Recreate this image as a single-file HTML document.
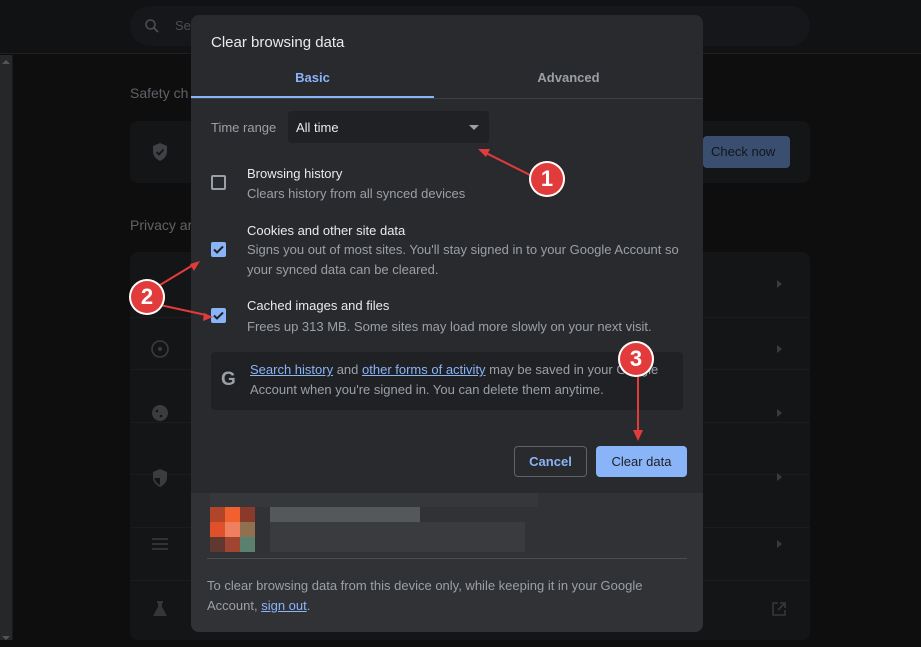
<!DOCTYPE html>
<html><head><meta charset="utf-8"><style>
*{margin:0;padding:0;box-sizing:border-box}
body{width:921px;height:647px;background:#0e0e0f;font-family:"Liberation Sans",Arial,sans-serif;position:relative;overflow:hidden}
.a{position:absolute}
.top{left:0;top:0;width:921px;height:54px;background:#111214;border-bottom:1px solid #1e1f21}
.search{left:130px;top:6px;width:680px;height:40px;border-radius:20px;background:#16171a}
.card{background:#141517;border-radius:8px}
.row{left:130px;width:680px;height:52px;border-top:1px solid #1b1c1e}
.tri{width:0;height:0;border-top:4px solid transparent;border-bottom:4px solid transparent;border-left:5px solid #3a3b3e}
.dlg{left:191px;top:15px;width:512px;height:617px;background:#292a2d;border-radius:8px;overflow:hidden}
.t{color:#e8eaed;font-size:13px}
.s{color:#9aa0a6;font-size:13px}
.cb{width:15px;height:15px;border-radius:2px}
.lnk{color:#8ab4f8;text-decoration:underline}
.px{position:absolute;width:15px;height:15px}
.num{width:36px;height:36px;border-radius:50%;background:#e23b3b;color:#fff;font-weight:bold;font-size:22px;text-align:center;line-height:36px;box-shadow:0 0 0 2px #fff inset}
</style></head><body>
<div class="a top"></div>
<div class="a search"></div>
<svg class="a" style="left:144px;top:18px" width="16" height="16" viewBox="0 0 16 16"><circle cx="6.5" cy="6.5" r="4.5" fill="none" stroke="#4a4d51" stroke-width="1.6"/><path d="M10 10l4 4" stroke="#4a4d51" stroke-width="1.8"/></svg>
<div class="a s" style="left:175px;top:18px;color:#4a4d51">Se</div>
<div class="a" style="left:0;top:55px;width:12px;height:585px;background:#262729"></div>
<div class="a" style="left:12px;top:55px;width:1px;height:585px;background:#1a1a1b"></div>
<div class="a" style="left:2px;top:60px;width:0;height:0;border-left:4px solid transparent;border-right:4px solid transparent;border-bottom:4px solid #555"></div>
<div class="a" style="left:2px;top:636px;width:0;height:0;border-left:4px solid transparent;border-right:4px solid transparent;border-top:4px solid #555"></div>
<div class="a" style="left:130px;top:85px;color:#5f6266;font-size:14px">Safety ch</div>
<div class="a card" style="left:130px;top:121px;width:680px;height:62px"></div>
<svg class="a" style="left:151px;top:142px" width="18" height="20" viewBox="0 0 18 20"><path d="M9 1L2 4v5c0 5 3 8 7 10 4-2 7-5 7-10V4z" fill="#3f4145"/><path d="M5.5 10l2.5 2.5 4.5-5" stroke="#141517" stroke-width="1.8" fill="none"/></svg>
<div class="a" style="left:703px;top:136px;width:87px;height:32px;background:#3a4f70;border-radius:4px;color:#11151c;font-size:13px;line-height:32px;padding-left:8px">Check now</div>
<div class="a" style="left:130px;top:217px;color:#5f6266;font-size:14px">Privacy ar</div>
<div class="a card" style="left:130px;top:252px;width:680px;height:388px"></div>
<div class="a row" style="top:317px"></div><div class="a row" style="top:369px"></div><div class="a row" style="top:422px"></div><div class="a row" style="top:474px"></div><div class="a row" style="top:527px"></div><div class="a row" style="top:580px"></div>
<div class="a tri" style="left:777px;top:280px"></div><div class="a tri" style="left:777px;top:345px"></div><div class="a tri" style="left:777px;top:409px"></div><div class="a tri" style="left:777px;top:473px"></div><div class="a tri" style="left:777px;top:540px"></div>
<svg class="a" style="left:771px;top:601px" width="16" height="16" viewBox="0 0 16 16"><path d="M7 2H2v12h12V9M9 2h5v5M14 2L7 9" stroke="#36383b" stroke-width="1.6" fill="none"/></svg>
<svg class="a" style="left:150px;top:339px" width="20" height="20"><circle cx="10" cy="10" r="8" fill="none" stroke="#3a3c40" stroke-width="1.6"/><circle cx="10" cy="10" r="2" fill="#3a3c40"/></svg>
<svg class="a" style="left:151px;top:404px" width="18" height="18"><circle cx="9" cy="9" r="8" fill="#3a3c40"/><circle cx="6" cy="7" r="1.3" fill="#141517"/><circle cx="10" cy="12" r="1.3" fill="#141517"/></svg>
<svg class="a" style="left:151px;top:468px" width="18" height="20"><path d="M9 1L2 4v5c0 5 3 8 7 10 4-2 7-5 7-10V4z" fill="#3a3c40"/><path d="M9 3v7H3.5c.5 3 2.5 5.5 5.5 7z" fill="#141517"/></svg>
<svg class="a" style="left:151px;top:535px" width="18" height="18"><path d="M1 4h16M1 9h16M1 14h16" stroke="#3a3c40" stroke-width="1.6"/></svg>
<svg class="a" style="left:151px;top:600px" width="18" height="18"><path d="M6 1h6v2h-1v4l5 9H2l5-9V3H6z" fill="#34363a"/></svg>

<div class="a dlg">
 <div class="a" style="left:20px;top:19px;color:#e8eaed;font-size:15px">Clear browsing data</div>
 <div class="a" style="left:0;top:55px;width:243px;text-align:center;color:#8ab4f8;font-size:13px;font-weight:bold">Basic</div>
 <div class="a" style="left:243px;top:55px;width:269px;text-align:center;color:#9aa0a6;font-size:13px;font-weight:bold">Advanced</div>
 <div class="a" style="left:0;top:81px;width:243px;height:2px;background:#8ab4f8"></div>
 <div class="a" style="left:0;top:83px;width:512px;height:1px;background:#3c4043"></div>
 <div class="a s" style="left:20px;top:105px">Time range</div>
 <div class="a" style="left:97px;top:96px;width:201px;height:32px;background:#202124;border-radius:4px"></div>
 <div class="a t" style="left:105px;top:105px">All time</div>
 <div class="a" style="left:278px;top:110px;border-left:5px solid transparent;border-right:5px solid transparent;border-top:5px solid #9aa0a6"></div>
 <div class="a cb" style="left:20px;top:160px;border:2px solid #9aa0a6"></div>
 <div class="a t" style="left:56px;top:151px">Browsing history</div>
 <div class="a s" style="left:56px;top:171px">Clears history from all synced devices</div>
 <div class="a cb" style="left:20px;top:227px;background:#8ab4f8"></div>
 <svg class="a" style="left:20px;top:227px" width="15" height="15"><path d="M3 7.5l3 3 6-6" stroke="#202124" stroke-width="2" fill="none"/></svg>
 <div class="a t" style="left:56px;top:208px">Cookies and other site data</div>
 <div class="a s" style="left:56px;top:225px;line-height:20px;width:440px">Signs you out of most sites. You'll stay signed in to your Google Account so your synced data can be cleared.</div>
 <div class="a cb" style="left:20px;top:293px;background:#8ab4f8"></div>
 <svg class="a" style="left:20px;top:293px" width="15" height="15"><path d="M3 7.5l3 3 6-6" stroke="#202124" stroke-width="2" fill="none"/></svg>
 <div class="a t" style="left:56px;top:283px">Cached images and files</div>
 <div class="a s" style="left:56px;top:304px">Frees up 313 MB. Some sites may load more slowly on your next visit.</div>
 <div class="a" style="left:20px;top:337px;width:472px;height:58px;background:#202124;border-radius:4px"></div>
 <div class="a" style="left:30px;top:354px;color:#9aa0a6;font-size:19px;font-weight:bold">G</div>
 <div class="a s" style="left:59px;top:345px;line-height:20px;width:430px"><span class="lnk">Search history</span> and <span class="lnk">other forms of activity</span> may be saved in your Google Account when you're signed in. You can delete them anytime.</div>
 <div class="a" style="left:323px;top:431px;width:73px;height:31px;border:1px solid #5f6368;border-radius:4px;color:#8ab4f8;font-size:13px;font-weight:bold;text-align:center;line-height:29px">Cancel</div>
 <div class="a" style="left:405px;top:431px;width:91px;height:31px;background:#8ab4f8;border-radius:4px;color:#202124;font-size:13px;text-align:center;line-height:31px">Clear data</div>
 <div class="a" style="left:0;top:478px;width:512px;height:139px;background:#303236"></div>
 <div class="a" style="left:19px;top:478px;width:328px;height:14px;background:#35373a"></div>
 <div class="a" style="left:79px;top:492px;width:150px;height:15px;background:#55585b"></div>
 <div class="a" style="left:79px;top:507px;width:255px;height:30px;background:#393b3e"></div>
 <div class="px" style="left:19px;top:492px;background:#b0452a"></div><div class="px" style="left:34px;top:492px;background:#f26030"></div><div class="px" style="left:49px;top:492px;background:#8a3a2a"></div>
 <div class="px" style="left:19px;top:507px;background:#e0502a"></div><div class="px" style="left:34px;top:507px;background:#ee8060"></div><div class="px" style="left:49px;top:507px;background:#917050"></div>
 <div class="px" style="left:19px;top:522px;background:#603830"></div><div class="px" style="left:34px;top:522px;background:#a04530"></div><div class="px" style="left:49px;top:522px;background:#5a8070"></div>
 <div class="a" style="left:16px;top:543px;width:480px;height:1px;background:#4a4d51"></div>
 <div class="a s" style="left:16px;top:561px;line-height:20px;width:470px">To clear browsing data from this device only, while keeping it in your Google Account, <span class="lnk">sign out</span>.</div>
</div>

<svg class="a" style="left:0;top:0" width="921" height="647">
<g stroke="#e23b3b" stroke-width="2" fill="#e23b3b">
<line x1="530" y1="175" x2="486" y2="153"/><path d="M478 149l12 0-4 8z" stroke="none"/>
<line x1="160" y1="285" x2="193" y2="265"/><path d="M200 261l-6 10-4-7z" stroke="none"/>
<line x1="160" y1="305" x2="206" y2="315"/><path d="M213 317l-10 4 1-8z" stroke="none"/>
<line x1="638" y1="375" x2="638" y2="432"/><path d="M638 441l-5-11h10z" stroke="none"/>
</g></svg>
<div class="a num" style="left:529px;top:161px">1</div>
<div class="a num" style="left:129px;top:279px">2</div>
<div class="a num" style="left:618px;top:341px">3</div>
</body></html>
